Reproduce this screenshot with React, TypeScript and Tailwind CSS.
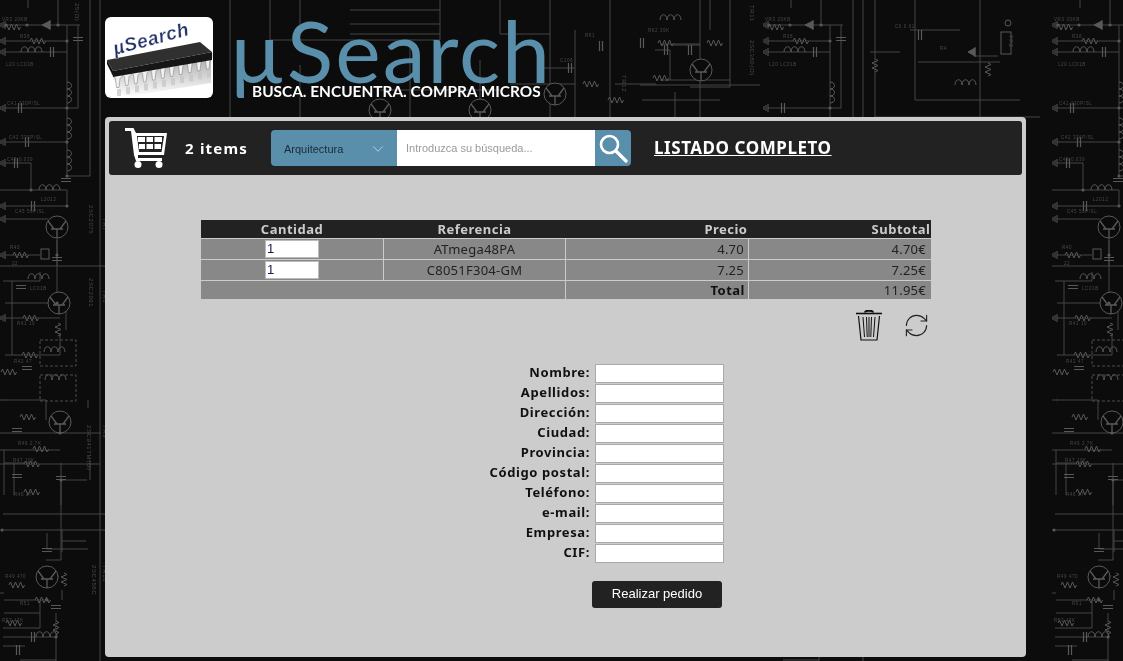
import { ChevronDown, RefreshCw } from "lucide-react";

const LINE = "#6a6a6a";

// schematic pieces for the page background
const Res = ({ x, y, v }: { x: number; y: number; v?: boolean }) => (
  <path
    d={v
      ? `M${x} ${y - 7}l3 1.5-6 2.5 6 2.5-6 2.5 6 2.5-3 1.5`
      : `M${x - 7} ${y}l1.5-3 2.5 6 2.5-6 2.5 6 2.5-6 2.5 6 1.5-3`}
    fill="#0c0c0c"
    stroke="#8a8a8a"
    strokeWidth="1"
  />
);

const Cap = ({ x, y, v }: { x: number; y: number; v?: boolean }) =>
  v ? (
    <path d={`M${x - 5} ${y - 1.5}h10M${x - 5} ${y + 1.5}h10`} stroke="#8a8a8a" strokeWidth="1.2" />
  ) : (
    <path d={`M${x - 1.5} ${y - 5}v10M${x + 1.5} ${y - 5}v10`} stroke="#8a8a8a" strokeWidth="1.2" />
  );

const Coil = ({ x, y, v }: { x: number; y: number; v?: boolean }) =>
  v ? (
    <path
      d={`M${x} ${y}c6 0 6 7 0 7c6 0 6 7 0 7c6 0 6 7 0 7`}
      fill="none"
      stroke="#8a8a8a"
      strokeWidth="1"
    />
  ) : (
    <path
      d={`M${x} ${y}c0-7 7-7 7 0c0-7 7-7 7 0c0-7 7-7 7 0`}
      fill="none"
      stroke="#8a8a8a"
      strokeWidth="1"
    />
  );

const Tr = ({ x, y, r = 11 }: { x: number; y: number; r?: number }) => (
  <g fill="none" stroke="#8a8a8a" strokeWidth="1">
    <circle cx={x} cy={y} r={r} fill="#0c0c0c" />
    <path d={`M${x - 6} ${y + 2}h12M${x} ${y + 2}v${r - 2}M${x - 3} ${y + 2}l-6 -8M${x + 3} ${y + 2}l6 -8`} strokeWidth="1.3" />
  </g>
);

const Gnd = ({ x, y }: { x: number; y: number }) => (
  <path d={`M${x} ${y - 4}v8M${x - 2} ${y - 3}v6M${x - 4} ${y - 2}v4`} stroke="#8a8a8a" strokeWidth="1" />
);

const Lbl = ({ x, y, t, v }: { x: number; y: number; t: string; v?: boolean }) => (
  <text
    x={x}
    y={y}
    fontSize={v ? 6 : 4.5}
    fill="#6f6f6f"
    letterSpacing="0.6"
    transform={v ? `rotate(90 ${x} ${y})` : undefined}
    fontFamily="'Liberation Sans', sans-serif"
  >
    {t}
  </text>
);

type Label = { x: number; y: number; t: string; v?: boolean };

const labels: Label[] = [
  { x: 2, y: 21, t: "VR3 20KB" },
  { x: 20, y: 38, t: "R38" },
  { x: 6, y: 66, t: "L20 LC01B" },
  { x: 7, y: 105, t: "C41  330P/SL" },
  { x: 9, y: 139, t: "C42  330P/SL" },
  { x: 7, y: 161, t: "C43  0.039" },
  { x: 41, y: 201, t: "L2012" },
  { x: 15, y: 213, t: "C45  56P/SL" },
  { x: 10, y: 249, t: "R40" },
  { x: 12, y: 265, t: "22" },
  { x: 30, y: 290, t: "LC01B" },
  { x: 17, y: 325, t: "R41  10" },
  { x: 14, y: 363, t: "R42  47" },
  { x: 18, y: 445, t: "R46  2.7K" },
  { x: 13, y: 462, t: "R47  10K" },
  { x: 14, y: 496, t: "R48  27" },
  { x: 5, y: 578, t: "R49 470" },
  { x: 20, y: 605, t: "R51" },
  { x: 2, y: 622, t: "R53 47K" },
  { x: 89, y: 205, t: "2SC2075", v: true },
  { x: 89, y: 278, t: "2SC2091", v: true },
  { x: 87, y: 425, t: "2SC941TM(O)", v: true },
  { x: 92, y: 565, t: "2SC458C", v: true },
  { x: 103, y: 218, t: "TR7", v: true },
  { x: 103, y: 290, t: "TR8", v: true },
  { x: 103, y: 425, t: "TR9", v: true },
  { x: 103, y: 565, t: "TR10", v: true },
  { x: 75, y: 3, t: "25(O)", v: true },
];

// one strip of the schematic, it repeats across the page every 1052px
const Strip = ({ dx, top }: { dx: number; top?: boolean }) => (
  <g transform={`translate(${dx} 0)`}>
    <path
      stroke={LINE}
      strokeWidth="1"
      fill="none"
      d="M58 0V25M28 0V8M67 25V176M90 0V176H67M78 25V108H5M58 25H80M5 25H60M5 41H67M5 52H67M5 142H67M5 163H31V190M0 190H67V206M5 206H67M5 219H48M57 238V266M0 266H105M5 255H40M57 240V303M5 303H48M66 296V330M5 318H60M12 281V355M3 281H40V272M5 355H60V333M5 400H4M0 433H101M0 450H60M46 420V400H0M62 418V433M0 464H100M3 530H105M3 514H105M88 400V408M61 480H87M61 480V560H46M4 560H4M61 415V433M4 495V450M4 463H35M61 463V505M14 463V495M88 549H47M47 533V549M4 578H4M47 600H4M40 613H4M56 613V661M3 637H56M3 646H25M0 593H4M90 460V480M86 541H62M62 530V552M58 577V575M62 590V600M40 600V628M3 628H40M20 660H56"
    />
    <Res x={12} y={27} />
    <path d="M42 25l8-4v8zM50 20v10" fill="#8a8a8a" stroke="#8a8a8a" />
    <Res x={37} y={41} />
    <Coil x={21} y={52} />
    <Cap x={52} y={52} />
    <Cap x={20} y={108} />
    <Cap x={78} y={39} v />
    <Coil x={67} y={82} v />
    <Coil x={67} y={118} v />
    <Coil x={67} y={150} v />
    <Cap x={27} y={142} />
    <Cap x={16} y={163} />
    <Coil x={39} y={190} />
    <Cap x={66} y={180} v />
    <Cap x={33} y={206} />
    <Tr x={57} y={227} />
    <rect x="41" y="249" width="8" height="10" fill="#0c0c0c" stroke="#8a8a8a" />
    <Res x={20} y={255} />
    <Cap x={57} y={259} v />
    <Coil x={28} y={279} />
    <Cap x={21} y={287} v />
    <Tr x={59} y={303} />
    <Res x={30} y={318} />
    <Res x={58} y={330} v />
    <Res x={29} y={355} />
    <path d="M40 340h36v26H40zM40 375h36v26H40z" stroke="#777" strokeDasharray="3 2" fill="none" />
    <Coil x={44} y={352} />
    <Coil x={45} y={380} />
    <Cap x={27} y={368} v />
    <Res x={8} y={372} />
    <Tr x={60} y={422} />
    <Res x={27} y={417} />
    <Cap x={17} y={430} v />
    <Res x={40} y={449} />
    <Res x={31} y={464} />
    <Cap x={17} y={476} v />
    <Cap x={61} y={478} v />
    <Res x={31} y={492} />
    <Gnd x={5} y={25} />
    <Gnd x={5} y={41} />
    <Gnd x={5} y={52} />
    <Gnd x={5} y={108} />
    <Gnd x={5} y={142} />
    <Gnd x={5} y={163} />
    <Gnd x={5} y={206} />
    <Gnd x={5} y={219} />
    <Gnd x={5} y={255} />
    <Gnd x={5} y={318} />
    <Tr x={47} y={577} />
    <Cap x={47} y={550} v />
    <Res x={64} y={580} v />
    <Res x={16} y={585} />
    <Res x={42} y={600} />
    <Cap x={56} y={607} v />
    <Res x={56} y={628} v />
    <Res x={13} y={623} />
    <Coil x={36} y={637} />
    <Cap x={33} y={637} />
    <Cap x={18} y={650} />
    {[[6, 25], [27, 25], [58, 25], [67, 41], [67, 108], [67, 142], [67, 176], [31, 190], [67, 206], [57, 255], [57, 303], [60, 433], [2, 530], [61, 480], [47, 600], [56, 637]].map(([cx, cy]) => (
      <circle key={`${cx}-${cy}`} cx={cx} cy={cy} r="1.6" fill="#888" />
    ))}
    {labels
      .filter((l) => (top ? l.y < 100 && !l.v : dx + l.x < 1105))
      .map((l) => (
        <Lbl key={l.t} {...l} />
      ))}
    <path stroke={LINE} fill="none" d="M100 0V661" />
  </g>
);

const Schematic = () => (
  <svg className="absolute inset-0 -z-10" width="1123" height="661" viewBox="0 0 1123 661">
    <rect width="1123" height="661" fill="#0c0c0c" />
    <g opacity="0.62">
      <Strip dx={0} />
      <Strip dx={1052} />
      <Strip dx={763} top />
      {/* strip of parts above the panel */}
      <path
        stroke={LINE}
        fill="none"
        d="M610 0V117M730 0V87H690M700 0V117M615 84H656M670 80V50H655M672 45H700M660 44H700M710 0V30M660 80H730M640 85H760M675 117V92M642 100H720M875 0V117H1040M870 52H900M915 0V100H1020M910 30H960M918 62H1000M980 0V117M975 56H998M550 117V0M230 117V0M270 0V40H440M300 40V0M350 10H440M350 24H440M350 34H440M440 0V40M300 117V65M380 90H500M410 40V117M480 60V117M500 0V34H550M575 68H540M575 30V117M510 84H575"
      />
      <Tr x={701} y={70} />
      <Tr x={555} y={94} />
      <Tr x={380} y={110} />
      <Tr x={480} y={110} />
      <Cap x={666} y={50} />
      <Cap x={690} y={50} />
      <Cap x={642} y={43} />
      <Res x={665} y={43} />
      <Res x={714} y={43} />
      <Res x={660} y={78} />
      <Res x={615} y={100} />
      <Res x={590} y={84} />
      <Coil x={660} y={20} />
      <Cap x={570} y={68} />
      <Cap x={601} y={46} />
      <Res x={875} y={66} v />
      <Res x={988} y={70} v />
      <Cap x={920} y={35} />
      <path d="M968 52l7 -4v8zM975 47v10" fill="#8a8a8a" stroke="#8a8a8a" />
      <rect x="1001" y="32" width="10" height="22" fill="none" stroke="#8a8a8a" />
      <Lbl x={1009} y={35} t="TP2" v />
      <circle cx="1008" cy="23" r="3" fill="none" stroke="#8a8a8a" />
      <Coil x={955} y={85} />
      <Lbl x={750} y={5} t="TR11" v />
      <Lbl x={750} y={40} t="2SC380(O)" v />
      <Lbl x={622} y={75} t="TR12" v />
      <Lbl x={585} y={37} t="R61" />
      <Lbl x={648} y={32} t="R62 39K" />
      <Lbl x={895} y={28} t="C6 0.01" />
      <Lbl x={940} y={50} t="R4" />
      <Lbl x={560} y={62} t="C106" />
    </g>
  </svg>
);

const LogoChip = () => (
  <svg width="108" height="81" viewBox="0 0 108 81">
    <defs>
      <linearGradient id="logoFloor" x1="0" y1="0" x2="0" y2="1">
        <stop offset="0" stopColor="#a8a8a8" />
        <stop offset="1" stopColor="#ffffff" />
      </linearGradient>
    </defs>
    <path d="M6 56L106 38V66L18 80Z" fill="url(#logoFloor)" />
    {[0, 1, 2, 3, 4, 5, 6, 7, 8, 9, 10].map((i) => (
      <g key={i}>
        <path d={`M${12 + i * 9} ${72 - i * 1.85}h4v7h-4z`} fill="#c4c4c4" opacity="0.7" />
        <path
          d={`M${9 + i * 9} ${56 - i * 1.85}l8 -1.5v5l-2 2-1 9h-2.5l-1 -9-1.5 -1.5z`}
          fill="#f2f2f2"
          stroke="#777"
          strokeWidth="0.5"
        />
      </g>
    ))}
    <path d="M2 43L95 25L107 35L8 54Z" fill="#303030" />
    <path d="M2 43L8 54V59L2 47Z" fill="#111" />
    <path d="M8 54L107 35V43L8 60Z" fill="#161616" />
    <text
      x="10"
      y="38"
      fill="#25346b"
      stroke="#ffffff"
      strokeWidth="0.3"
      fontSize="19"
      fontStyle="italic"
      fontWeight="700"
      letterSpacing="0.5"
      transform="rotate(-15 10 38)"
      fontFamily="'Liberation Sans', sans-serif"
    >
      µSearch
    </text>
  </svg>
);

const CartIcon = () => (
  <svg width="42" height="40" viewBox="0 0 42 40" fill="white">
    <path d="M0 0H8.5L11 5H42L39 27H13V30H37V33H11L9 27L6 3H0Z" />
    <path d="M12 8L14 24H36.5L39 8Z" fill="#222" />
    <path d="M13 9H20V14H13ZM21.5 9H28V14H21.5ZM29.5 9H37V14H29.5ZM14 16H20V21H14ZM21.5 16H28V21H21.5ZM29.5 16H36V21H29.5Z" />
    <circle cx="13" cy="36.5" r="3.5" />
    <circle cx="34" cy="36.5" r="3.5" />
  </svg>
);

const SearchIcon = () => (
  <svg width="30" height="30" viewBox="0 0 30 30" fill="none" stroke="white">
    <circle cx="11.5" cy="11.5" r="8.5" strokeWidth="2.6" />
    <path d="M18 18L28 28" strokeWidth="3.2" strokeLinecap="round" />
  </svg>
);

const TrashIcon = () => (
  <svg width="26" height="31" viewBox="0 0 26 31" fill="none" stroke="#111">
    <path d="M0 3.5H26" strokeWidth="1.6" />
    <path d="M9 2.5C9 0 17 0 17 2.5" strokeWidth="2" />
    <path d="M2.5 6L5 30H21L23.5 6" strokeWidth="1.2" />
    <path d="M7 7L8.5 27M10.5 7L11.2 27M13 7V27M15.5 7L14.8 27M19 7L17.5 27" strokeWidth="1" />
  </svg>
);

const fields = ["Nombre", "Apellidos", "Dirección", "Ciudad", "Provincia", "Código postal", "Teléfono", "e-mail", "Empresa", "CIF"];

const cartItems = [
  { ref: "ATmega48PA", price: "4.70", subtotal: "4.70€" },
  { ref: "C8051F304-GM", price: "7.25", subtotal: "7.25€" },
];

export default function App() {
  return (
    <div className="relative z-0 h-[661px] w-[1123px] overflow-hidden font-['Noto_Sans',sans-serif]">
      <Schematic />

      <header className="flex h-[117px] pl-[105px] pt-[17px]">
        <div className="h-[81px] w-[108px] overflow-hidden rounded-md bg-white">
          <LogoChip />
        </div>
        <div className="ml-[16px] flex flex-col">
          <div className="-mt-[3px] h-[72px] font-['Lato',sans-serif] text-[86px] leading-[72px] tracking-[2px] text-[#5a8fab]">µSearch</div>
          <div className="ml-[23px] font-['Lato',sans-serif] text-[15.4px] font-bold leading-[10px] text-white">BUSCA. ENCUENTRA. COMPRA MICROS</div>
        </div>
      </header>

      <main className="ml-[105px] h-[540px] w-[921px] rounded-[4px] bg-[#cccccc] p-1">
        <nav className="flex h-[54px] items-center rounded-[3px] bg-[#222222] pl-4">
          <CartIcon />
          <span className="ml-[18px] w-[86px] text-[15px] font-bold tracking-[1.2px] text-white">2 items</span>
          <div className="flex h-9 w-[360px]">
            <div className="flex w-[126px] items-center justify-between rounded-l-[4px] bg-[#5a8fab] pl-[13px] pr-[10px] pt-[2px] font-['Liberation_Sans',sans-serif] text-[11px] text-[#1c2a33]">
              Arquitectura
              <ChevronDown size={18} strokeWidth={1} color="#d5e3ea" />
            </div>
            <input
              className="w-[198px] bg-white pl-[9px] font-['Liberation_Sans',sans-serif] text-[11px] outline-none placeholder:text-[#9a9a9a]"
              placeholder="Introduzca su búsqueda..."
            />
            <div className="flex w-9 items-center justify-center rounded-r-[4px] bg-[#5a8fab]">
              <SearchIcon />
            </div>
          </div>
          <a className="ml-[23px] text-[17px] font-bold uppercase tracking-[0.55px] text-white underline">Listado completo</a>
        </nav>

        <table className="ml-[92px] mt-[45px] w-[730px] -translate-x-px table-fixed border-collapse text-[13px] tracking-[0.25px] text-[#222222]">
          <thead>
            <tr className="h-[18px] bg-[#222222] tracking-[0.5px] text-[#cccccc]">
              <th className="w-[183px] text-center leading-4">Cantidad</th>
              <th className="w-[182px] text-center leading-4">Referencia</th>
              <th className="w-[183px] pr-[1px] text-right leading-4">Precio</th>
              <th className="w-[182px] text-right leading-4">Subtotal</th>
            </tr>
          </thead>
          <tbody>
            {cartItems.map((item) => (
              <tr key={item.ref} className="h-[21px] bg-[#888888]">
                <td className="border border-[#cccccc] p-0 text-center">
                  <input
                    defaultValue="1"
                    className="mx-auto block h-[18px] w-[54px] border border-[#bbbbbb] bg-white pl-[1px] font-['Liberation_Sans',sans-serif] text-[13px] text-[#1a1a4a] outline-none"
                  />
                </td>
                <td className="border border-[#cccccc] p-0 text-center leading-4">{item.ref}</td>
                <td className="border border-[#cccccc] p-0 pr-1 text-right leading-4">{item.price}</td>
                <td className="border border-y-[#cccccc] border-l-[#cccccc] border-r-transparent p-0 pr-1 text-right leading-4">{item.subtotal}</td>
              </tr>
            ))}
            <tr className="h-[19px] bg-[#888888]">
              <td colSpan={2} className="border border-[#cccccc] p-0" />
              <td className="border border-[#cccccc] p-0 pr-[3px] text-right font-bold leading-4 tracking-[0.5px] text-[#111111]">Total</td>
              <td className="border border-y-[#cccccc] border-l-[#cccccc] border-r-transparent p-0 pr-1 text-right leading-4">11.95€</td>
            </tr>
          </tbody>
        </table>

        <div className="ml-[747px] mt-[10px] flex h-[32px] items-center gap-[21px]">
          <TrashIcon />
          <RefreshCw size={27} strokeWidth={1} color="#222222" />
        </div>

        <form className="mt-[22px]">
          {fields.map((f) => (
            <div key={f} className="flex h-5 items-start">
              <label className="w-[481px] text-right text-[13px] font-bold leading-[16px] tracking-[0.6px] text-[#111111]">{f}:</label>
              <input className="ml-[5px] h-[19px] w-[129px] border border-[#aaaaaa] bg-white outline-none" />
            </div>
          ))}
          <button
            type="button"
            className="ml-[483px] mt-[17px] block h-[27px] w-[130px] rounded-[3px] bg-[#222222] font-['Liberation_Sans',sans-serif] text-[13px] text-white"
          >
            Realizar pedido
          </button>
        </form>
      </main>
    </div>
  );
}
